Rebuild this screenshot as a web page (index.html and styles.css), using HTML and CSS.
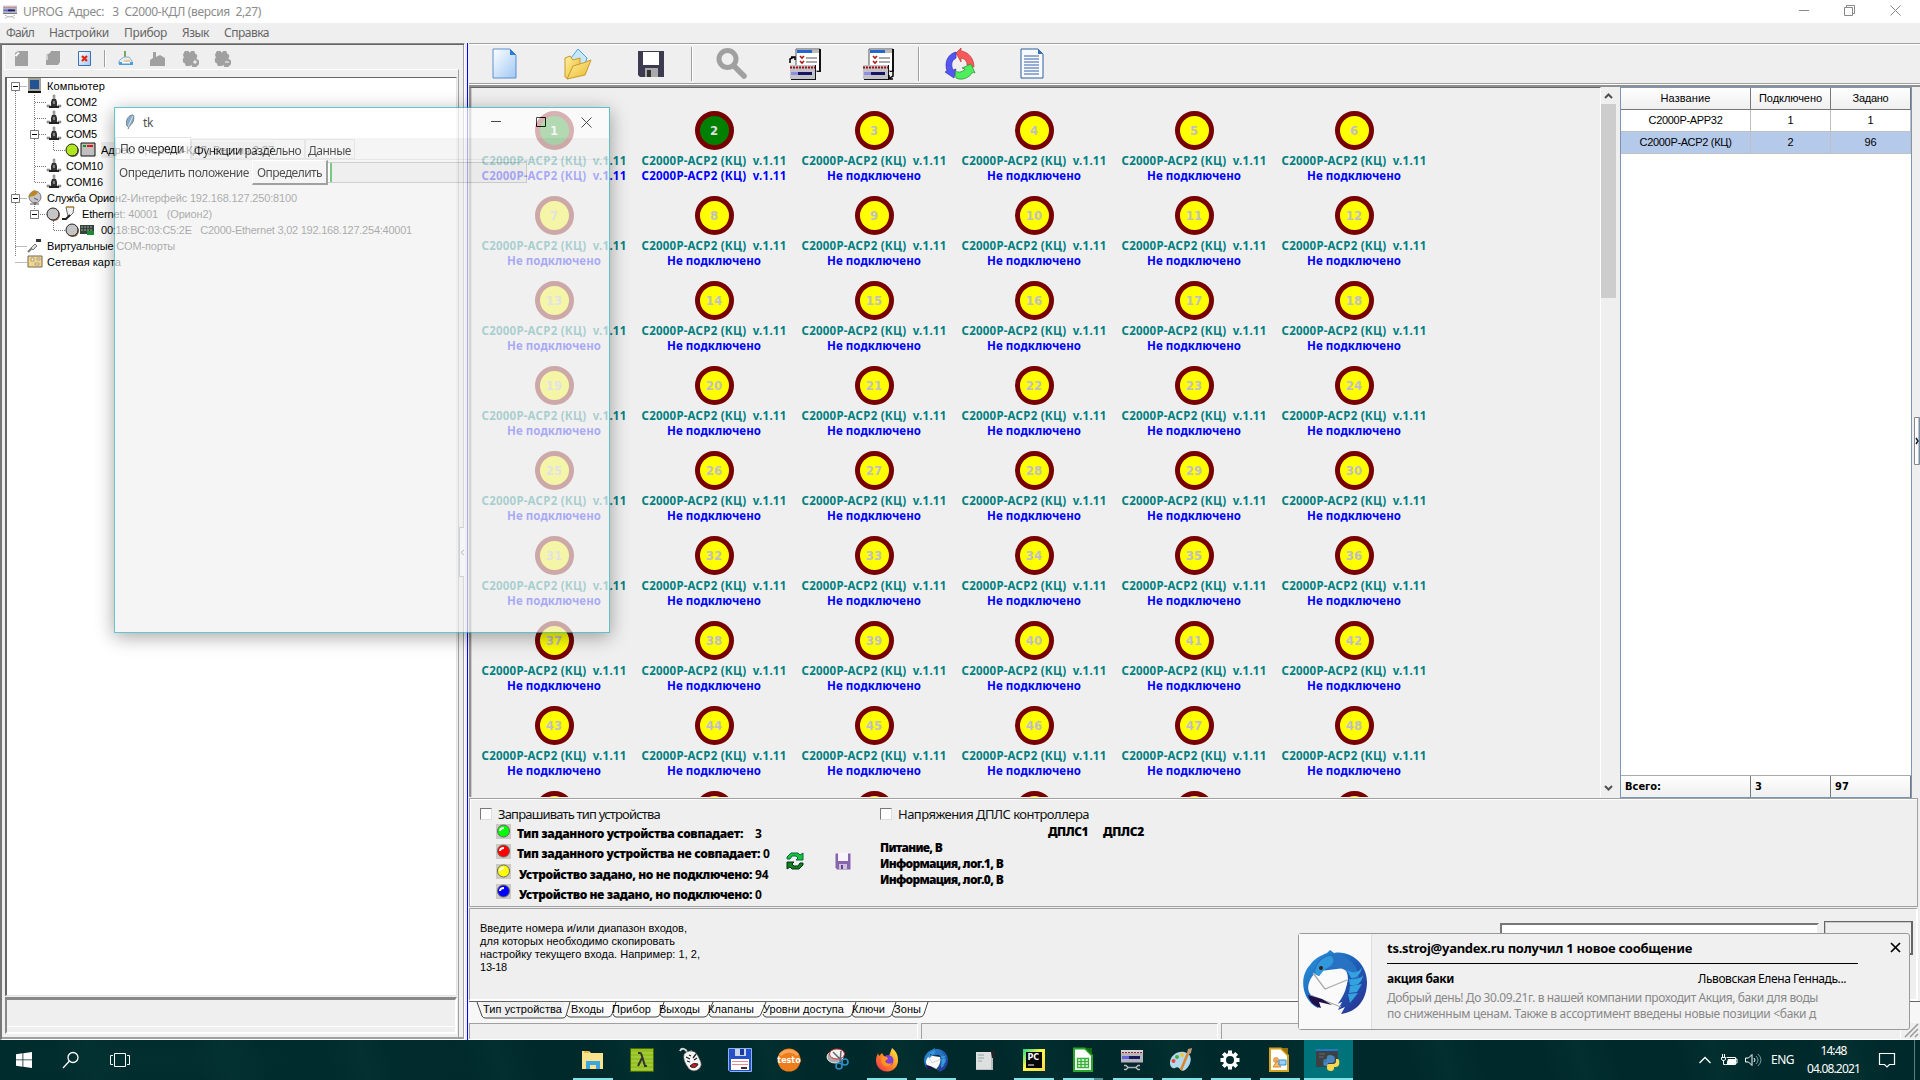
FILE: index.html
```html
<!DOCTYPE html>
<html lang="ru">
<head>
<meta charset="utf-8">
<title>UPROG</title>
<link rel="stylesheet" href="styles.css">
</head>
<body>
<svg class="defs" width="0" height="0">
<defs>
<linearGradient id="sheet" x1="0" y1="0" x2="1" y2="1"><stop offset="0" stop-color="#fff"/><stop offset="1" stop-color="#9fc8f4"/></linearGradient>
<linearGradient id="gold" x1="0" y1="0" x2="1" y2="1"><stop offset="0" stop-color="#fff3a0"/><stop offset="1" stop-color="#eab52c"/></linearGradient>
<linearGradient id="bird" x1="0" y1="0" x2="1" y2="1"><stop offset="0" stop-color="#2a9be0"/><stop offset=".5" stop-color="#1d60b8"/><stop offset="1" stop-color="#2c2c8e"/></linearGradient>
<linearGradient id="fire" x1="1" y1="0" x2="0" y2="1"><stop offset="0" stop-color="#fff04a"/><stop offset=".5" stop-color="#ff8a1f"/><stop offset="1" stop-color="#f5245a"/></linearGradient>
<linearGradient id="pcg" x1="0" y1="0" x2="1" y2="1"><stop offset="0" stop-color="#21d789"/><stop offset=".45" stop-color="#fcf84a"/><stop offset="1" stop-color="#fcd84a"/></linearGradient>
<symbol id="com" viewBox="0 0 16 16"><path d="M7 1h2v4H7z" fill="#aaa" stroke="#777" stroke-width=".5"/><path d="M6 5h4l1 3v5H5V8z" fill="#333"/><path d="M1 11h3v2H1zM12 11h3v2h-3z" fill="#999" stroke="#777" stroke-width=".5"/><path d="M7 7h2v3H7z" fill="#888"/><path d="M3 12h10v2H3z" fill="#222"/></symbol>
<symbol id="gearoff" viewBox="0 0 18 18"><path d="M3 1h4l1 2 2-2h3l1 3 2 1v3l-1 1 3 2v4l-3 3h-4l-1-2-2 1H4l-1-3-2-1V9l1-1-1-3z" fill="#a0a0a0"/></symbol>
<symbol id="thunder" viewBox="0 0 64 64"><path d="M24 3 27 0l4 3C49 0 64 15 64 32c0 18-10 30-26 32l4-7-7 3 4-8-5 2 5-12c8-8 7-19 2-24L18 21C8 26 4 39 12 49l5 6-2 3C-2 50-4 26 7 15 12 8 17 6 24 3z" fill="url(#bird)"/><path d="M11 24l5-4 27 4 1 8c-1 8-3 14-11 24L8 45C3 40 5 31 11 24z" fill="#fafafa"/><path d="M10 23l12 16 22-9M7 45l31 12" fill="none" stroke="#aaa" stroke-width="1.3"/><path d="M5 45l14 4 10 6-13-3 2 6C11 56 7 52 5 45z" fill="#201049"/><path d="M12 24C11 12 19 4 31 4c18 2 27 17 25 30-4 0-7-4-10-11-6-6-16-7-25-4l-5 7z" fill="#2872c4"/><path d="M12 24C12 14 20 6 28 6c5 4 2 10-6 13l-6 7z" fill="#3198db"/><circle cx="18" cy="18" r="2" fill="#321"/><path d="M44 20c8 5 13 1 15-3-1 8-6 11-11 11M46 29c8 1 12-1 14-4-1 9-7 11-13 10M47 36l12-2-5 8-8 1M45 44l10-1-8 10" fill="#33a2df"/></symbol>
<symbol id="device" viewBox="0 0 24 22"><path d="M1 1h22v13H1z" fill="#b5b5bd"/><path d="M1 1h22v3H1z" fill="#d8d4d8"/><path d="M2 3.5h20" stroke="#922" stroke-dasharray="2 1"/><path d="M2 7h13v3H2z" fill="#6565dd"/><path d="M9 7h11v3H9z" fill="#181860"/><path d="M1 13h22v1H1z" fill="#667"/><path d="M7 18.500h10" stroke="#aaa" stroke-width="1.500"/><path d="M4 16.500h2l2 2-2 2H4M20 16.500h-2l-2 2 2 2h2" stroke="#bbb" stroke-width="1.400" fill="none"/></symbol>
<symbol id="props" viewBox="0 0 32 32"><path d="M7 1h24v22H7z" fill="#fff" stroke="#555"/><path d="M30 1h2v23H28v-1h2z" fill="#111"/><path d="M8 2h15v3H8z" fill="#2466d0"/><path d="M23 2h7v3h-7z" fill="#bbb"/><path d="M11 8l2 2 2-2M11 13l2 2 2-2" fill="none" stroke="#b01818" stroke-width="1.6"/><path d="M17 10h11M17 14h11" stroke="#555"/><path d="M1 17h25v14H1z" fill="#c2c2c8"/><path d="M26 17h1v15H2v-1h24z" fill="#111"/><path d="M1 19.5h25" stroke="#9e1010" stroke-width="2" stroke-dasharray="2 1"/><path d="M2 24h8v3H2z" fill="#8e8ee4"/><path d="M9 24h14v3H9z" fill="#151560"/></symbol>
</defs>
</svg>

<header class="titlebar">
  <svg width="16" height="14" viewBox="0 0 24 22"><use href="#device"/></svg>
  <span class="title" data-w="238">UPROG  Адрес:   3  С2000-КДЛ (версия  2,27)</span>
  <div class="winbtns">
    <svg width="10" height="10"><path d="M0 5.5h10" stroke="#888"/></svg>
    <svg width="11" height="11"><path d="M.5 2.5h8v8h-8zM2.500 2V.5h8v8H9" fill="none" stroke="#888"/></svg>
    <svg width="11" height="11"><path d="M.5.500l10 10M10.500.500l-10 10" stroke="#888"/></svg>
  </div>
</header>
<nav class="menu"><span data-w="28">Файл</span><span data-w="60">Настройки</span><span data-w="43">Прибор</span><span data-w="27">Язык</span><span data-w="45">Справка</span></nav>

<main class="work">
  <section class="left">
    <div class="lefttools">
      <svg width="14" height="16"><path d="M1 2l3-2h10v15H1z" fill="#a0a0a0"/><path d="M1.500 5L5 1.500" stroke="#fff" stroke-width="2"/></svg>
      <svg width="14" height="16"><path d="M0 4l4-2 1-2h9v11l-2 3H0z" fill="#a0a0a0"/><path d="M1 4v5" stroke="#fff"/></svg>
      <svg width="14" height="16"><path d="M.5.500h12v14H.500z" fill="url(#sheet)" stroke="#3971b8"/><path d="M4 5l5 5M9 5l-5 5" stroke="#e5260c" stroke-width="2.200"/></svg>
      <i class="sep"></i>
      <svg width="16" height="16"><path d="M6 0h2v8H6z" fill="#79a568"/><path d="M3 8l3-2h5l3 4v3H1v-3z" fill="#e3edf6" stroke="#9ab"/><path d="M1 11h14v3H1z" fill="#4b9fd8"/><path d="M4 11h8v1.500H4z" fill="#fff"/><path d="M6 10h6" stroke="#e8a33a"/></svg>
      <svg width="16" height="16"><path d="M0 9l3-2V1h3v5l4-2 5 3v8H0z" fill="#a0a0a0"/></svg>
      <svg width="17" height="17"><use href="#gearoff"/><path d="M13 10v4M11 12h4" stroke="#fff"/></svg>
      <svg width="17" height="17"><use href="#gearoff"/><path d="M11 12h4" stroke="#fff"/></svg>
    </div>
    <div class="treeframe">
      <div class="tree">
        <svg class="treelines" width="120" height="200"><path d="M8.500 14v165M8.500 9.500h12M8.500 121.500h12M8.500 169.500h12M8.500 185.500h12M27.500 18v88M28 25.500h12M28 41.500h12M28 57.500h12M28 89.500h12M28 105.500h12M46.500 64v9.500h12M27.500 127v10.500h12M46.500 144v9.500h12" fill="none" stroke="#777" stroke-dasharray="1 1"/><g fill="#fff" stroke="#777"><path d="M4.500 5.500h8v8h-8zM23.500 53.500h8v8h-8zM4.500 117.500h8v8h-8zM23.500 133.500h8v8h-8z"/></g><path d="M6 9.500h5M25 57.500h5M6 121.500h5M25 137.500h5" stroke="#000"/></svg>
        <div class="row r1"><svg width="16" height="16"><path d="M1 0h13v13H1z" fill="#a7a39a"/><path d="M3 2h9v9H3z" fill="#235391"/><path d="M1 13h13v2H1z" fill="#111"/></svg><span data-w="58">Компьютер</span></div>
        <div class="row r2"><svg width="16" height="16"><use href="#com"/></svg><span data-w="31">COM2</span></div>
        <div class="row r2"><svg width="16" height="16"><use href="#com"/></svg><span data-w="31">COM3</span></div>
        <div class="row r2"><svg width="16" height="16"><use href="#com"/></svg><span data-w="31">COM5</span></div>
        <div class="row r3"><svg width="32" height="16"><circle cx="8" cy="9" r="6" fill="#765"/><circle cx="7" cy="8" r="6" fill="#b0e61e" stroke="#222"/><path d="M16 1h14v13H16z" fill="#c0c0c0" stroke="#111"/><path d="M18 3h3v2h-3z" fill="#090"/><path d="M22 3h6v2h-6z" fill="#e11"/></svg><span class="sel" data-w="173">Адрес: 3, С2000-КДЛ, Версия 2,27</span></div>
        <div class="row r2"><svg width="16" height="16"><use href="#com"/></svg><span data-w="37">COM10</span></div>
        <div class="row r2"><svg width="16" height="16"><use href="#com"/></svg><span data-w="37">COM16</span></div>
        <div class="row r1"><svg width="16" height="16"><circle cx="8" cy="7" r="6" fill="#c5c5ca" stroke="#777"/><path d="M1 7l6-7 4 3-4 3z" fill="#bf861b"/><path d="M7 8l4 2M8 12v3M3 14h9" stroke="#555"/></svg><span data-w="250">Служба Орион2-Интерфейс 192.168.127.250:8100</span></div>
        <div class="row r2b"><svg width="32" height="16"><circle cx="8" cy="9" r="6" fill="#964"/><circle cx="7" cy="8" r="6" fill="#c5c5c5" stroke="#222"/><path d="M20 1h8l-1 6-3 3h-2l-1-4z" fill="#eee" stroke="#666"/><path d="M24 9l-4 4h-4" fill="none" stroke="#222" stroke-width="2"/><path d="M20 1h8" stroke="#c82"/></svg><span data-w="130">Ethernet: 40001   (Орион2)</span></div>
        <div class="row r3"><svg width="32" height="16"><circle cx="8" cy="9" r="6" fill="#964"/><circle cx="7" cy="8" r="6" fill="#c5c5c5" stroke="#222"/><path d="M15 3h14v9H15z" fill="#354438"/><path d="M16 5h12M16 8h12" stroke="#aaa" stroke-dasharray="2 1"/><path d="M22 9h7v4h-7z" fill="#1b8c35"/></svg><span data-w="311">00:18:BC:03:C5:2E   C2000-Ethernet 3,02 192.168.127.254:40001</span></div>
        <div class="row r1"><svg width="16" height="16"><path d="M1 14l4-4" stroke="#777" stroke-width="2"/><path d="M4 10l4-4 2 2-4 4z" fill="#ddd" stroke="#777"/><path d="M9 1h5v3h-5z" fill="#333"/></svg><span data-w="128">Виртуальные COM-порты</span></div>
        <div class="row r1"><svg width="16" height="16"><path d="M1 2h14v11H1z" fill="#f1d98c" stroke="#765"/><path d="M4 4h3v3H4zM10 4h3v2h-3zM8 9h4v2H8z" fill="#fff5c5" stroke="#a98"/></svg><span data-w="74">Сетевая карта</span></div>
      </div>
      <div class="treefoot"><div></div></div>
    </div>
    <div class="handle"><svg width="5" height="48"><path d="M4 22l-3 2.500 3 2.500" fill="none" stroke="#234"/></svg></div>
  </section>

  <section class="right">
    <div class="tools">
      <svg class="t1" width="26" height="32"><path d="M1 1h17l6 6v23H1z" fill="url(#sheet)" stroke="#5a8fd0"/><path d="M18 1v6h6z" fill="#2f7cd6"/></svg>
      <svg class="t2" width="30" height="32"><path d="M8 10l7-9 9 9-4 12H9z" fill="#c9e7fb" stroke="#4ba3dc"/><path d="M2 10l5-2 3 4 7-2v9L5 31 2 29z" fill="url(#gold)" stroke="#c9982a"/><path d="M10 18l10-3 8-3-6 15L4 31z" fill="url(#gold)" stroke="#c9982a"/></svg>
      <svg class="t3" width="28" height="28"><path d="M1 1h26v26H3l-2-2z" fill="#3d3b52"/><path d="M6 2h16v13H6z" fill="#fff"/><path d="M8 18h13v9H8z" fill="#aaa"/><path d="M10 20h4v7h-4z" fill="#333"/></svg>
      <i class="sep s1"></i>
      <svg class="t4" width="32" height="32"><circle cx="11.500" cy="11" r="8.500" fill="none" stroke="#a0a0a0" stroke-width="5"/><path d="M18 18l10 10" stroke="#a0a0a0" stroke-width="5.500" stroke-linecap="round"/></svg>
      <svg class="t5" width="32" height="32"><use href="#props"/><path d="M1 15v-4l4-2M2 9h4v3" fill="none" stroke="#000" stroke-width="1.500"/></svg>
      <svg class="t6" width="32" height="32"><use href="#props"/><path d="M31 24v4l-3 2M27 27v4h4" fill="none" stroke="#000" stroke-width="1.500"/></svg>
      <i class="sep s2"></i>
      <svg class="t7" width="32" height="32"><path d="M12 5l5-5v3c8 1 13 8 13 16l-7-2c0-4-2-6-6-7v4z" fill="#f65a5a" stroke="#c03838" stroke-width=".7"/><path d="M12 4v6c-5 3-5 7-3 12l3-1-2 9-9-6 2-1C0 14 4 6 12 4z" fill="#5555f2" stroke="#3434b0" stroke-width=".7"/><path d="M11 23c4 2 8 1 10-2l-3-1 9-4 4 9-2-1c-4 6-11 9-17 6z" fill="#4eed5c" stroke="#2a8a35" stroke-width=".7"/></svg>
      <svg class="t8" width="24" height="32"><path d="M1 1h17l5 5v24H1z" fill="#f7fbff" stroke="#2f5f9f"/><path d="M18 1v5h5z" fill="#3a74b8"/><path d="M4 8h15M4 11h15M4 14h15M4 17h15M4 20h15M4 23h15M4 26h15" stroke="#365fa5"/></svg>
    </div>
    <div class="mid">
      <div class="devframe"><div class="devices" id="devices"></div></div>
      <div class="scroll"><svg width="15" height="17"><path d="M4 11l3.500-3.500L11 11" fill="none" stroke="#505050" stroke-width="2"/></svg><div class="thumb"></div><svg width="15" height="17"><path d="M4 6l3.500 3.500L11 6" fill="none" stroke="#505050" stroke-width="2"/></svg></div>
      <div class="table">
        <div class="tr th"><span><b data-w="50">Название</b></span><span><b data-w="63">Подключено</b></span><span><b data-w="36">Задано</b></span></div>
        <div class="tr"><span><b data-w="74">С2000Р-АРР32</b></span><span>1</span><span>1</span></div>
        <div class="tr on"><span><b data-w="92">С2000Р-АСР2 (КЦ)</b></span><span>2</span><span>96</span></div>
        <div class="blank"></div>
        <div class="tr tf"><span><b data-w="36">Всего:</b></span><span>3</span><span>97</span></div>
      </div>
      <div class="gutter"><svg width="7" height="50"><path d="M1.500 1.500h5v47h-5z" fill="#fff" stroke="#888"/><path d="M5.500 2v46" stroke="#a9c8ee"/><path d="M3 22l2 3-2 3" fill="none" stroke="#123" stroke-width="1.500"/></svg></div>
    </div>
    <div class="legend">
      <div class="lcol">
        <label class="chk"><i></i><span data-w="162">Запрашивать тип устройства</span></label>
        <div class="led"><svg width="15" height="15"><path d="M0 0h15v15H0z" fill="#ccc8c2"/><circle cx="7.500" cy="7" r="6" fill="#0f0" stroke="#666"/><path d="M4 7q0-3 4-3" stroke="#fff" fill="none" stroke-width="2"/></svg><b data-w="226">Тип заданного устройства совпадает:</b><em class="c1">3</em></div>
        <div class="led"><svg width="15" height="15"><path d="M0 0h15v15H0z" fill="#ccc8c2"/><circle cx="7.500" cy="7" r="6" fill="#f00" stroke="#666"/><path d="M4 7q0-3 4-3" stroke="#fff" fill="none" stroke-width="2"/></svg><b data-w="243">Тип заданного устройства не совпадает:</b><em class="c2">0</em></div>
        <div class="led n3"><svg width="15" height="15"><path d="M0 0h15v15H0z" fill="#ccc8c2"/><circle cx="7.500" cy="7" r="6" fill="#ff0" stroke="#666"/><path d="M4 7q0-3 4-3" stroke="#fff" fill="none" stroke-width="2"/></svg><b data-w="233">Устройство задано, но не подключено:</b><em>94</em></div>
        <div class="led n3"><svg width="15" height="15"><path d="M0 0h15v15H0z" fill="#ccc8c2"/><circle cx="7.500" cy="7" r="6" fill="#00f" stroke="#666"/><path d="M4 7q0-3 4-3" stroke="#fff" fill="none" stroke-width="2"/></svg><b data-w="233">Устройство не задано, но подключено:</b><em>0</em></div>
      </div>
      <svg class="refresh" width="18" height="18"><path d="M1 7V5l4-4h7l2 2 3-2v7h-7l2-2-2-2H6L4 7z" fill="#1ac13a" stroke="#064" /><path d="M17 11v2l-4 4H6l-2-2-3 2v-7h7l-2 2 2 2h4l2-3z" fill="#127f20" stroke="#031"/></svg>
      <svg class="psave" width="16" height="17"><path d="M.5.500h15v16H2l-1.500-2z" fill="#8765ad"/><path d="M3 0h10v8H3z" fill="#f7f3ff"/><path d="M4 11h8v5H4z" fill="#cfc0df"/><path d="M6 12h2v4H6z" fill="#654388"/></svg>
      <div class="vcol">
        <label class="chk"><i></i><span data-w="191">Напряжения ДПЛС контроллера</span></label>
        <div class="dp"><b data-w="40">ДПЛС1</b><b data-w="41">ДПЛС2</b></div>
        <b data-w="62">Питание, В</b><b data-w="123">Информация, лог.1, В</b><b data-w="123">Информация, лог.0, В</b>
      </div>
    </div>
    <div class="copy">
      <div class="hint"><span data-w="207">Введите номера и/или диапазон входов,</span><span data-w="195">для которых необходимо скопировать</span><span data-w="220">настройку текущего входа. Например: 1, 2,</span><span data-w="27">13-18</span></div>
      <div class="edit"></div><div class="btn"></div>
    </div>
    <div class="tabs">
      <svg class="tabshape" width="460" height="18"><path d="M12 0h84l-5 14q-1 2-3 2H22q-2 0-3-2z" fill="#efefef"/><g fill="#fff"><path d="M101 1h47l-6 14h-37z"/><path d="M148 1h48l-6 14h-39zM196 1h49l-6 14h-39zM245 1h52l-6 14h-42zM297 1h90l-6 14h-80zM387 1h41l-6 14h-31zM428 1h33l-6 14h-24z"/></g><g fill="none" stroke="#444"><path d="M8 0l5 14q1 2 3 2h78q2 0 3-2l4-14M98 13q1 2 3 2h38q3 0 4-3l4-12M144 12q1 3 3 3h40q3 0 4-3l4-12M191 12q1 3 3 3h41q3 0 4-3l5-12M240 12q1 3 3 3h45q3 0 4-3l5-12M294 12q1 3 3 3h82q3 0 4-3l4-12M383 12q1 3 3 3h33q3 0 4-3l4-12M423 12q1 3 3 3h25q3 0 4-3l4-12"/></g></svg>
      <span class="a0" data-w="79">Тип устройства</span><span class="a1" data-w="33">Входы</span><span class="a2" data-w="39">Прибор</span><span class="a3" data-w="41">Выходы</span><span class="a4" data-w="46">Клапаны</span><span class="a5" data-w="81">Уровни доступа</span><span class="a6" data-w="33">Ключи</span><span class="a7" data-w="27">Зоны</span>
    </div>
    <div class="status"><div></div><div></div><div></div><svg width="14" height="14"><path d="M1 14L14 1M6 14l8-8M11 14l3-3" stroke="#999" stroke-width="1.500"/></svg></div>
  </section>
</main>

<footer class="taskbar">
  <div class="sys">
    <svg width="16" height="16"><path d="M0 2.300l6.500-1v6.200H0zM7.300 1.200L16 0v7.500H7.300zM0 8.300h6.500v6.400L0 13.800zM7.300 8.300H16V16l-8.700-1.200z" fill="#fff"/></svg>
    <svg width="18" height="18"><circle cx="11" cy="6.500" r="5" fill="none" stroke="#fff" stroke-width="1.300"/><path d="M7.500 10L1 17" stroke="#fff" stroke-width="1.300"/></svg>
    <svg width="20" height="16"><path d="M4.500 1.500h11v13h-11zM3 3.500H.500v9H3M17 3.500h2.500v9H17" fill="none" stroke="#fff"/></svg>
  </div>
  <div class="apps">
    <div class="app run"><svg width="24" height="24"><path d="M1 3h7l2 2h12v16H1z" fill="#fce28c"/><path d="M3 3h5v2H3z" fill="#f6b73c"/><path d="M5 21v-8h14v8h-4v-4H9v4z" fill="#3ba7e0"/></svg></div>
    <div class="app"><svg width="24" height="24"><path d="M.500.500h23v23H.500z" fill="#93c020" stroke="#4b6908"/><path d="M1 5h22M1 9h22M1 13h22M1 17h22M1 21h22" stroke="#b1d652"/><path d="M8 5h2q1 0 1.500 1.500L15 18h2M12 10L8 18" fill="none" stroke="#333" stroke-width="2"/></svg></div>
    <div class="app"><svg width="24" height="24"><path d="M1 3q1-3 4-2 3 1 3 4l5-2" stroke="#ddd" fill="none" stroke-width="1.800"/><path d="M5 6q5-5 11-2 3 3 5 8 3 5-1 9-5 4-10 0Q3 12 5 6z" fill="#f5f5f5" stroke="#444" stroke-width=".7"/><path d="M7 9l4 2M14 10l3-4M8 13l3 1M15 12l3-2M10 7l2 1" stroke="#222" stroke-width="1.300"/><path d="M11 18q3-4 8-2-2 5-7 3z" fill="#cc1a1a" stroke="#222"/></svg></div>
    <div class="app"><svg width="24" height="24"><path d="M.5.500h23v23H2L.500 22z" fill="#2450c8" stroke="#8fb0f0"/><path d="M7 1h11v7H7z" fill="#c8d4e8"/><path d="M12 1h4v6h-4z" fill="#173ba0"/><path d="M3 11h18v11H3z" fill="#fff"/><path d="M4 13.500h16M4 16.500h16" stroke="#e68b96"/><path d="M13 20h6" stroke="#333" stroke-width="2"/></svg></div>
    <div class="app"><svg width="24" height="24"><circle cx="12" cy="12" r="11.500" fill="#ee7d1c"/><path d="M3 7q9-8 18 0" stroke="#f8a75a" stroke-width="3" fill="none"/><text x="12" y="14.500" text-anchor="middle" class="testo">testo</text></svg></div>
    <div class="app"><svg width="24" height="24"><ellipse cx="9" cy="9" rx="8" ry="6" fill="#aaa" stroke="#eee"/><ellipse cx="11" cy="6" rx="7.500" ry="5" fill="#f4f4f4" stroke="#c33"/><path d="M7 4l9 9M15 3l-1 11" stroke="#667" stroke-width="1.500"/><circle cx="13" cy="18" r="3" fill="none" stroke="#2d8fc8" stroke-width="1.600"/><circle cx="19" cy="14" r="3" fill="none" stroke="#2d8fc8" stroke-width="1.600"/></svg></div>
    <div class="app run"><svg width="24" height="24"><path d="M3 5l1 3 3-3 2 3h5l3-8c5 4 6 8 6 12a11 11 0 0 1-22 1C1 9 2 8 3 5z" fill="url(#fire)"/><circle cx="13" cy="12.500" r="5.500" fill="#7c3fd8"/><path d="M7 8l5 1 1 2-3 2q2 4 7 2-3 6-9 2-3-4-1-9z" fill="#ff9420"/></svg></div>
    <div class="app run"><svg width="24" height="24"><use href="#thunder"/></svg></div>
    <div class="app"><svg width="24" height="24"><path d="M3 4h17v18H3z" fill="#b9bfbc"/><path d="M3 4h15v17H3z" fill="#dde0de"/><path d="M5 7h6M5 10h6M5 13h4" stroke="#8aa"/><path d="M18 4l2-3h2v9h-3z" fill="#1c2424"/></svg></div>
    <div class="app run"><svg width="24" height="24"><path d="M1 1h22v22H1z" fill="url(#pcg)"/><path d="M4 4h16v16H4z" fill="#050505"/><text x="5.500" y="12" class="pc">PC</text><path d="M6 17h6" stroke="#fff"/></svg></div>
    <div class="app run dbl"><svg width="24" height="24"><path d="M3 .500h11l7 7V23H3z" fill="#fff" stroke="#28a828" stroke-width="2"/><path d="M14 0h7v7z" fill="#146b14"/><path d="M6.500 10.500h11v9h-11zM6 13.500h12M6 16.500h12M10 10v10M14 10v10" fill="none" stroke="#35b035" stroke-width="1.300"/></svg></div>
    <div class="app run"><svg width="24" height="22"><use href="#device"/></svg></div>
    <div class="app run"><svg width="24" height="24"><path d="M1 15C1 8 8 3 15 4c7 1 9 8 4 15-3 4-6 5-8 2-2-2-3-2-5-1-3 1-5-2-5-5z" fill="#b3d9f0"/><circle cx="4.500" cy="13" r="2" fill="#e34b38"/><circle cx="8" cy="9" r="2" fill="#49a942"/><circle cx="13" cy="7" r="2" fill="#f5c430"/><path d="M12 22L19 5" stroke="#dd8427" stroke-width="2.500"/><path d="M18 5l1-4 4-1-1 5-3 2z" fill="#c6986e"/></svg></div>
    <div class="app run"><svg width="24" height="24"><circle cx="12" cy="12" r="5.500" fill="none" stroke="#fff" stroke-width="3"/><g stroke="#fff" stroke-width="4"><path d="M12 2.500V6M12 18v3.500M2.500 12H6M18 12h3.500M5.300 5.300l2.500 2.500M16.200 16.200l2.500 2.500M18.700 5.300l-2.500 2.500M7.800 16.200l-2.500 2.500"/></g></svg></div>
    <div class="app run"><svg width="24" height="24"><path d="M3 .500h11l7 7V23H3z" fill="#fff" stroke="#d6a21c" stroke-width="2"/><path d="M14 0h7v7z" fill="#96700c"/><circle cx="9" cy="12" r="3" fill="#e9a55f"/><path d="M6 19l4-6 4 6z" fill="#f3bd68" stroke="#d88a2b"/><path d="M12 12h7v5h-7z" fill="#9bd0f3" stroke="#3b8dd0"/></svg></div>
    <div class="app run act"><svg width="24" height="24"><path d="M0 1h22v18H0z" fill="#3c4143"/><path d="M0 1h22v2H0z" fill="#2277cc"/><path d="M3 6h6M3 9h5" stroke="#666"/><path d="M13 8h4q2 0 2 2v4h-6v1h-4q-2 0-2-1v-1q0-2 2-2h4z" fill="#3774a8"/><path d="M10 14l1-5q0-2 3-2t4 2v4q0 2-3 2h-3v3H9q-3-1-1-4z" fill="#4685bd"/><path d="M20 11h2q2 1 1 6-1 2-3 2h-2v1q0 3-3 3-4 0-4-3v-2q0-2 2-2h4q3 0 3-3z" fill="#fbd94e"/></svg></div>
  </div>
  <div class="tray">
    <svg class="y1" width="12" height="8"><path d="M.500 7L6 1.500 11.500 7" fill="none" stroke="#fff" stroke-width="1.300"/></svg>
    <svg class="y2" width="17" height="12"><path d="M5.500 3.500h9v7h-10M15 5h1v4h-1" fill="none" stroke="#fff"/><path d="M7 5h7v5H6V8z" fill="#fff"/><path d="M1.500 0v3M3.500 0v3M.5 3.500h4v2l-1.500 1h-1l-1.500-1zM2.500 6v4.500h2" fill="none" stroke="#fff"/></svg>
    <svg class="y3" width="17" height="14"><path d="M.500 5h3L7 1.500v11L3.500 9h-3z" fill="none" stroke="#fff"/><path d="M9 5q2 2 0 4" fill="none" stroke="#fff"/><path d="M11 3q4 4 0 8M13 1q6 6 0 12" fill="none" stroke="#7a9a9b"/></svg>
    <span class="eng" data-w="23">ENG</span>
    <div class="clock"><span data-w="26">14:48</span><span data-w="53">04.08.2021</span></div>
    <svg class="y4" width="17" height="17"><path d="M.500 1.500h15v11h-5L8 15l-2.500-2.500h-5z" fill="none" stroke="#fff" stroke-width="1.200"/></svg>
  </div>
</footer>

<aside class="tk">
  <div class="tkbar">
    <svg width="10" height="16"><path d="M3 15L9 2" stroke="#333"/><path d="M2 12C0 7 3 1 8 1c2 4 0 9-5 12z" fill="#5488b4" stroke="#35495c"/><path d="M3 13L8 2" stroke="#cde"/></svg>
    <span data-w="10">tk</span>
    <svg class="b1" width="10" height="10"><path d="M0 4.500h10" stroke="#000"/></svg>
    <svg class="b2" width="11" height="11"><path d="M.500.500h9v9h-9z" fill="none" stroke="#000"/></svg>
    <svg class="b3" width="11" height="11"><path d="M.500.500l10 10M10.500.500l-10 10" stroke="#000"/></svg>
  </div>
  <div class="tktabs"><span class="cur"><b data-w="64">По очереди</b></span><span class="k2"><b data-w="107">Функции раздельно</b></span><span class="k3"><b data-w="43">Данные</b></span></div>
  <div class="tkbody"><span class="lbl" data-w="130">Определить положение</span><span class="tkbtn"><b data-w="65">Определить</b></span><span class="entry"></span></div>
</aside>

<aside class="toast">
  <div class="pic"><svg width="64" height="64"><use href="#thunder"/></svg></div>
  <div class="msg">
    <div class="mt"><b data-w="305">ts.stroj@yandex.ru получил 1 новое сообщение</b></div>
    <div class="ms"><b data-w="67">акция баки</b><span data-w="148">Львовская Елена Геннадь...</span></div>
    <div class="mb"><span data-w="431">Добрый день! До 30.09.21г. в нашей компании проходит Акция, баки для воды</span><span data-w="429">по сниженным ценам. Также в ассортимент введены новые позиции &lt;баки д</span></div>
  </div>
  <svg class="x" width="11" height="11"><path d="M1 1l9 9M10 1l-9 9" stroke="#000" stroke-width="1.700"/></svg>
</aside>
<script src="app.js"></script>
</body>
</html>
```
FILE: styles.css
```css
* { box-sizing: border-box; }
body { margin: 0; width: 1920px; height: 1080px; overflow: hidden; position: relative; display: flex; flex-direction: column; background: #efefef; color: #000; font: 11px/16px "Liberation Sans", sans-serif; }
svg { display: block; flex: none; overflow: visible; }
.defs { position: absolute; }
span, b, em { white-space: pre; font-style: normal; }
[data-w] { display: inline-block; flex: none; }

.titlebar { height: 23px; background: #fff; display: flex; align-items: center; padding-left: 2px; font: 12px/22px "Noto Sans", sans-serif; color: #8c8c8c; }
.title { margin-left: 5px; }
.winbtns { margin-left: auto; display: flex; gap: 35px; padding-right: 19px; margin-top: -3px; }
.menu { height: 20px; display: flex; gap: 15px; padding-left: 6px; font: 12px/20px "Noto Sans", sans-serif; color: #666; }

.work { height: 997px; display: flex; }
.left { position: relative; width: 465px; border: 1px solid #8a8a8a; border-left: 2px solid #777; border-right: 1px solid #fff; border-bottom: 1px solid #fff; padding: 1px 1px 2px 1px; box-shadow: inset 0 1px #666, inset -1px 0 #a0a0a0, inset 0 -2px #a0a0a0; display: flex; flex-direction: column; }
.lefttools { height: 24px; display: flex; align-items: center; padding: 3px 0 0 9px; gap: 16px; margin-left: 1px; border-left: 1px solid #fff; }
.lefttools svg { margin-right: 2px; }
.lefttools .sep { margin: 0 -4px 0 -6px; }
.lefttools .sep ~ svg { margin-right: 0; }
.lefttools .sep ~ svg:last-child { margin-left: -1px; }
.sep { width: 2px; height: 17px; border-left: 1px solid #a0a0a0; border-right: 1px solid #fff; flex: none; }
.treeframe { flex: 1; margin: 0 4px 0 1px; border-top: 1px solid #fff; border-right: 1px solid #a0a0a0; padding: 7px 1px 0 1px; display: flex; flex-direction: column; }
.tree { position: relative; height: 919px; background: #fff; border: 1px solid #666; border-left-width: 2px; border-right: 1px solid #e3e3e3; border-bottom: 1px solid #e3e3e3; overflow: hidden; }
.treelines { position: absolute; left: 0; top: -1px; }
.row { position: relative; height: 16px; display: flex; align-items: center; gap: 4px; }
.r1 { padding-left: 20px; }
.r2 { padding-left: 39px; }
.r3 { padding-left: 58px; }
.r2b { padding-left: 39px; }
.sel { background: #efefef; }
.treefoot { height: 37px; margin-top: 1px; border: 2px solid #888; border-right-color: #fff; border-bottom-color: #fff; border-top-width: 3px; }
.treefoot div { height: 27px; border-bottom: 1px solid #fff; }
.handle { position: absolute; right: 0; top: 483px; width: 5px; height: 50px; border: 1px solid #789; border-right: 0; background: #fff; }

.right { margin-left: 2px; width: 1453px; border-left: 1px solid #0000ff; display: flex; flex-direction: column; padding-left: 1px; }
.tools { height: 41px; border-top: 1px solid #a0a0a0; border-bottom: 1px solid #a0a0a0; box-shadow: inset 0 1px #fff, 0 1px #fff; display: flex; align-items: center; flex: none; }
.t1 { margin-left: 23px; } .t2 { margin-left: 45px; } .t3 { margin-left: 44px; }
.tools .sep { height: 34px; }
.s1 { margin-left: 26px; } .t4 { margin-left: 23px; } .t5 { margin-left: 41px; } .t6 { margin-left: 41px; }
.s2 { margin-left: 24px; } .t7 { margin-left: 24px; } .t8 { margin-left: 44px; }
.mid { height: 713px; margin-top: 1px; display: flex; flex: none; border-top: 2px solid #909090; }
.devframe { width: 1132px; height: 710px; border-left: 2px solid #909090; border-top: 1px solid #666; box-shadow: inset 1px 0 #ccc; border-right: 1px solid #fff; overflow: hidden; }
.devices { display: grid; grid-template-columns: repeat(6, 160px); grid-auto-rows: 85px; padding: 23px 0 0 3px; }
.dev { display: flex; flex-direction: column; align-items: center; font: bold 11.500px/15px "Noto Sans", sans-serif; color: #008080; }
.ball { width: 39px; height: 39px; border: 5px solid #780000; border-radius: 50%; background: #ff0; color: #c0c0c0; font: bold 13px/29px "DejaVu Sans Condensed", sans-serif; text-align: center; margin-bottom: 3px; }
.ball.ok { background: #008000; color: #ddd; }
.dev u { text-decoration: none; color: #0000ff; }
.scroll { width: 15px; height: 710px; display: flex; flex-direction: column; }
.thumb { height: 194px; background: #cdcdcd; margin-bottom: auto; }
.table { margin-left: 4px; width: 292px; height: 711px; border: 1px solid #7a96b4; background: #fff; display: flex; flex-direction: column; }
.tr { height: 22px; display: grid; grid-template-columns: 130px 80px 80px; text-align: center; line-height: 21px; border-bottom: 1px solid #c0c0c0; flex: none; }
.tr span { border-right: 1px solid #c0c0c0; }
.tr b { font-weight: normal; }
.th { background: linear-gradient(#fff, #efefef); border-bottom-color: #777; }
.th span, .tf span { border-right-color: #777; }
.on { background: #b5caea; }
.blank { flex: 1; }
.tf { border-top: 1px solid #aaa; border-bottom: 0; text-align: left; background: linear-gradient(#fff, #efefef); font: bold 11px/21px "DejaVu Sans Condensed", sans-serif; }
.tf span { padding-left: 4px; }
.tf b { font-weight: bold; }
.gutter { padding-top: 329px; margin-left: 1px; }
.legend { height: 109px; width: 1449px; flex: none; border: 1px solid #a0a0a0; box-shadow: inset 1px 1px #fff; display: flex; padding: 8px 0 0 10px; font: bold 12px/16px "Noto Sans", sans-serif; }
.lcol { width: 306px; flex: none; }
.chk { display: flex; align-items: center; height: 14px; gap: 6px; font: 13px/14px "Noto Sans", sans-serif; color: #111; margin-bottom: 1px; }
.chk i { width: 12px; height: 12px; background: #fff; border: 1px solid #777; border-right-color: #ddd; border-bottom-color: #ddd; }
.led { display: flex; height: 20px; padding-left: 16px; gap: 6px; align-items: flex-start; padding-top: 2px; }
.led b, .led em { padding-top: 2px; }
.led em { margin-left: -4px; } .led .c1 { margin-left: 6px; } .led .c2 { margin-left: -3px; }
.n3 { gap: 8px; } .n3 em { margin-left: -5px; }
.n3 b, .n3 em { padding-top: 3px; }
.refresh { margin-top: 45px; } .psave { margin: 46px 0 0 31px; }
.vcol { margin-left: 29px; display: flex; flex-direction: column; }
.vcol > b { width: 200px; height: 16px; }
.dp { display: flex; gap: 15px; padding: 2px 0 0 168px; height: 18px; }
.copy { height: 93px; width: 1449px; flex: none; display: flex; border-top: 1px solid #a0a0a0; border-left: 1px solid #a0a0a0; border-bottom: 2px solid #fff; border-right: 2px solid #fff; margin-top: 1px; padding-left: 10px; }
.hint { width: 1020px; padding-top: 13px; line-height: 13px; display: flex; flex-direction: column; align-items: flex-start; }
.edit { margin-top: 14px; width: 319px; height: 24px; background: #fff; border: 2px solid #777; border-right-color: #eee; }
.btn { margin: 12px 0 0 5px; width: 89px; height: 34px; border: 2px solid #666; border-left: 1px solid #666; border-top: 1px solid #666; box-shadow: inset 1px 1px #ccc; }
.tabs { position: relative; height: 22px; flex: none; border-top: 1px solid #666; background: #f7f7f7; display: flex; line-height: 14px; }
.tabs span { position: relative; }
.tabshape { position: absolute; left: 0; top: 0; }
.a0 { margin-left: 14px; } .a1 { margin-left: 9px; } .a2 { margin-left: 8px; } .a3 { margin-left: 8px; } .a4 { margin-left: 8px; } .a5 { margin-left: 9px; } .a6 { margin-left: 8px; } .a7 { margin-left: 9px; }
.status { height: 17px; display: flex; gap: 3px; flex: none; border-bottom: 1px solid #fff; }
.status div { width: 449px; border-top: 1px solid #a0a0a0; border-left: 1px solid #a0a0a0; border-right: 1px solid #fff; }
.status div:nth-child(2) { width: 297px; }
.status div:nth-child(3) { width: 680px; }

.taskbar { position: absolute; left: 0; top: 1040px; width: 1920px; height: 40px; display: flex; color: #fff; background: radial-gradient(ellipse 400px 60px at 8% 50%, #04343480, transparent), repeating-linear-gradient(74deg, #00292b 0 60px, #032f2f 95px, #00292b 130px); font: 12px/18px "Noto Sans", sans-serif; }
.sys { width: 568px; display: flex; align-items: center; padding-left: 16px; gap: 30px; }
.apps { display: flex; }
.app { width: 49.050px; display: flex; justify-content: center; align-items: center; position: relative; }
.run::after { content: ""; position: absolute; left: 5px; bottom: 0; width: 40px; height: 2px; background: #83e3e8; }
.dbl::after { background: linear-gradient(90deg, #83e3e8 31px, #4f8f93 31px); }
.act { background: #00727a; }
.act::after { left: 0; width: 49px; }
.testo { font: bold 8px "DejaVu Sans"; fill: #fff; }
.pc { font: bold 8px "DejaVu Sans"; fill: #fff; }
.tray { display: flex; align-items: center; margin-left: auto; width: 221px; height: 40px; }
.y2 { margin-left: 10px; } .y3 { margin-left: 7px; } .eng { margin-left: 9px; }
.clock { width: 55px; margin-left: 12px; display: flex; flex-direction: column; align-items: center; }
.y4 { margin-left: 18px; }
.tray::after { content: ""; width: 1px; height: 40px; background: #5d7b7c; margin-left: 18px; }

.tk { position: absolute; left: 114px; top: 107px; width: 496px; height: 526px; opacity: .7; background: #f1f1f1; border: 1px solid #23afb8; box-shadow: 0 4px 18px #00000080; font: 12px/16px "Noto Sans", sans-serif; }
.tk b { font-weight: normal; }
.tkbar { height: 30px; background: #fff; display: flex; align-items: center; padding-left: 10px; }
.tkbar span { margin-left: 8px; }
.tkbar svg { margin-top: -2px; }
.b1 { margin-left: 338px; } .b2 { margin-left: 35px; } .b3 { margin-left: 34px; }
.tktabs { display: flex; height: 22px; align-items: flex-end; border-bottom: 1px solid #ddd; }
.tktabs span { height: 20px; border: 1px solid #dcdcdc; background: #f0f0f0; padding: 3px 0 0 2px; line-height: 16px; }
.tktabs .cur { width: 76px; height: 22px; background: #fff; padding: 3px 0 0 4px; border-bottom: 0; }
.tktabs .k2 { width: 114px; } .tktabs .k3 { width: 50px; }
.tkbody { display: flex; align-items: center; height: 25px; }
.lbl { margin-left: 4px; }
.tkbtn { margin-left: 3px; width: 76px; height: 25px; line-height: 23px; text-align: center; border: 2px solid #777; border-left: 1px solid #fff; border-top: 1px solid #fff; }
.entry { width: 199px; height: 21px; border: 1px solid #bbb; background: #e9e9e9; border-left: 0; box-shadow: inset 2px 0 #fff, inset 4px 0 #3cb34b; }

.toast { position: absolute; left: 1298px; top: 933px; width: 612px; height: 97px; background: #f0f0f0; border: 1px solid #999; border-radius: 3px; display: flex; font: 12px/16px "Noto Sans", sans-serif; }
.pic { width: 73px; background: #f9f9f9; border-right: 1px solid #ddd; padding: 16px 0 0 4px; }
.msg { width: 471px; margin-left: 15px; }
.mt { height: 30px; border-bottom: 1px solid #000; padding-top: 6px; font-size: 13px; }
.ms { display: flex; justify-content: space-between; padding: 7px 12px 0 0; }
.mb { margin-top: 3px; color: #888; display: flex; flex-direction: column; }
.x { margin: 8px 0 0 32px; }
```
FILE: app.js
```js
// Device cells: the first two report their own type, the rest are not connected.
// The last row is scrolled out of view, so only the tops of its balls show.
const grid = document.getElementById('devices');
for (let i = 1; i <= 54; i++) {
  const cell = document.createElement('div');
  cell.className = 'dev';
  const ok = i < 3;
  const type = 'С2000Р-АСР2 (КЦ)  v.1.11';
  cell.innerHTML = i > 48 ? '<div class="ball"></div>' :
    `<div class="ball${ok ? ' ok' : ''}">${i}</div>` +
    `<span data-w="145">${type}</span>` +
    `<u><span data-w="${ok ? 145 : 94}">${ok ? type : 'Не подключено'}</span></u>`;
  grid.appendChild(cell);
}

// Space each caption's letters so that it fills its nominal width.
document.querySelectorAll('[data-w]').forEach(el => {
  const want = +el.dataset.w;
  el.style.width = 'max-content';
  const gap = (want - el.getBoundingClientRect().width) / el.textContent.length;
  el.style.letterSpacing = gap + 'px';
  el.style.width = '';
});
```
